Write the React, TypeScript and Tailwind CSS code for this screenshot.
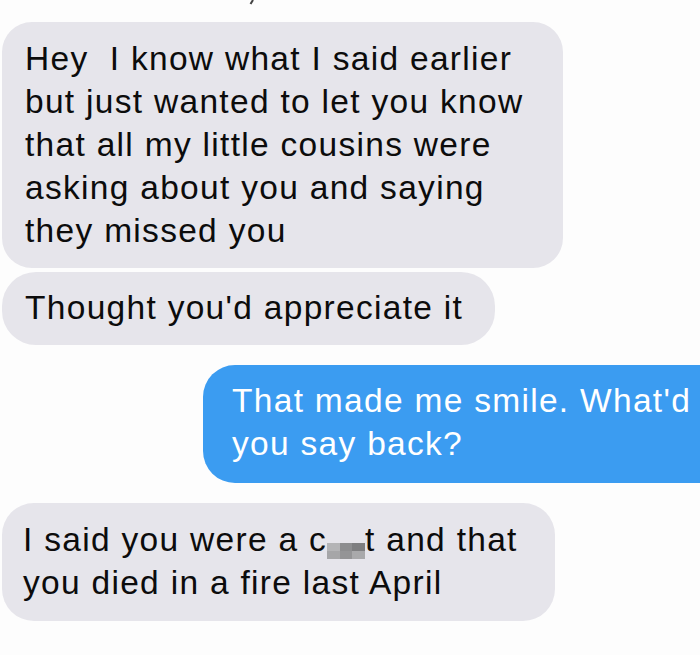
const grey = "bg-[#e6e5eb]";

function Censor() {
  return (
    <span className="inline-grid grid-cols-3 grid-rows-2 w-[38px] h-[16px] align-baseline">
      <span className="bg-[#b4b4b6]" />
      <span className="bg-[#8d8d8f]" />
      <span className="bg-[#7e7e80]" />
      <span className="bg-[#a6a6a8]" />
      <span className="bg-[#949496]" />
      <span className="bg-[#a9a9ab]" />
    </span>
  );
}

export default function App() {
  return (
    <div className="relative w-[700px] h-[655px] overflow-hidden bg-[#fdfdfd] font-['Liberation_Sans',Arial,sans-serif] text-[33.5px] leading-[43px] tracking-[1.3px] text-[#0c0c0c]">
      <svg className="absolute left-[247px] top-0" width="8" height="5" viewBox="0 0 8 5">
        <path d="M6 0 L3.5 4" stroke="#444" strokeWidth="2" />
      </svg>

      <div className="flex flex-col pt-[22px]">
        <div className={`ml-[2px] w-[561px] rounded-[30px] ${grey} pl-[23px] pt-[15px] pb-[16px] whitespace-nowrap`}>
          Hey&nbsp; I know what I said earlier
          <br />
          but just wanted to let you know
          <br />
          that all my little cousins were
          <br />
          asking about you and saying
          <br />
          they missed you
        </div>

        <div className={`mt-[4px] ml-[2px] w-[493px] rounded-[34px] ${grey} pl-[23px] pt-[14px] pb-[16px] whitespace-nowrap`}>
          Thought you'd appreciate it
        </div>

        <div className="mt-[20px] ml-[203px] w-[540px] rounded-[32px] bg-[#3b9cf1] pl-[29px] pt-[14px] pb-[18px] whitespace-nowrap text-white">
          That made me smile. What'd
          <br />
          you say back?
        </div>

        <div className={`mt-[20px] ml-[2px] w-[553px] rounded-[32px] ${grey} pl-[21px] pt-[15px] pb-[17px] whitespace-nowrap`}>
          I said you were a c<Censor />t and that
          <br />
          you died in a fire last April
        </div>
      </div>
    </div>
  );
}
